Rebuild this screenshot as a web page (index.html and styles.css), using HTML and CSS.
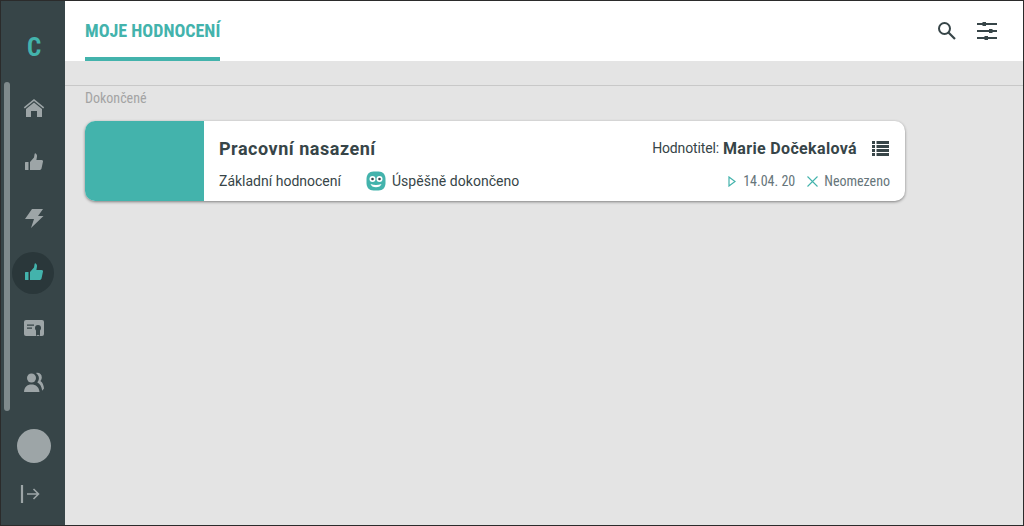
FILE: index.html
```html
<!DOCTYPE html>
<html lang="cs">
<head>
<meta charset="utf-8">
<title>Moje hodnocení</title>
<link rel="stylesheet" href="styles.css">
</head>
<body>
<div class="app">
  <aside class="sidebar">
    <div class="scrollbar"></div>
    <div class="logo">C</div>
    <nav class="nav">
      <div class="nav-item"><svg class="icon" width="24" height="24" viewBox="0 0 24 24"><path d="M12 3 1.800 11.300l1 1.200L12 5l9.200 7.500 1-1.200z"/><path d="M12 6.500 20 13v8h-5v-6H9v6H4v-8z"/></svg></div>
      <div class="nav-item"><svg class="icon" width="24" height="24" viewBox="0 0 24 24"><path d="M3.500 11h3v8h-3a.5.5 0 0 1-.5-.5v-7a.5.5 0 0 1 .5-.5z"/><path d="M8 11l4-4.500.6-3.500c.1-.6.500-.8 1-.6 1 .4 1.600 1.600 1.400 3l-.6 3.600h5.300c1 0 1.500.8 1.300 1.600l-1.500 7c-.2.900-.8 1.400-1.700 1.400H8z"/></svg></div>
      <div class="nav-item"><svg class="icon" width="24" height="24" viewBox="0 0 24 24"><path d="M10 3h11l-5 7h5.500L9 22l3-9H3z"/></svg></div>
      <div class="nav-item active"><svg class="icon" width="24" height="24" viewBox="0 0 24 24"><path d="M3.500 11h3v8h-3a.5.5 0 0 1-.5-.5v-7a.5.5 0 0 1 .5-.5z"/><path d="M8 11l4-4.500.6-3.500c.1-.6.500-.8 1-.6 1 .4 1.600 1.600 1.400 3l-.6 3.600h5.300c1 0 1.500.8 1.300 1.600l-1.500 7c-.2.900-.8 1.400-1.700 1.400H8z"/></svg></div>
      <div class="nav-item"><svg class="icon" width="24" height="24" viewBox="0 0 24 24"><rect x="2" y="4" width="20" height="16" rx="2"/><path class="icon-cut" d="M5 8.500h7v1.200H5zM5 11.500h5v1.200H5z"/><circle class="icon-cut" cx="16" cy="12" r="3"/><path class="icon-cut" d="M14 14h4v6l-2-1.200-2 1.200z"/></svg></div>
      <div class="nav-item"><svg class="icon" width="24" height="24" viewBox="0 0 24 24"><circle cx="9.500" cy="7" r="4.500"/><path d="M2 21c.2-5 3-7.500 7.500-7.500s7.500 2.500 8 7.500z"/><path d="M14 2c3-.8 5.800 1.200 5.800 4.200 0 1.400-.5 2.800-1.400 3.800 2.200 1.500 3.400 4.300 3.600 7.500l-1.800 2.300c-.5-4-2.200-7-5-8.500 1-1 1.700-2.600 1.700-4 0-2-1-3.600-2.900-5.300z"/></svg></div>
    </nav>
    <div class="avatar"></div>
    <div class="logout"><svg class="icon-line" width="24" height="24" viewBox="0 0 24 24"><path d="M4 3v18" stroke-width="2.200"/><path d="M9 12h11.500M15.500 7l5 5-5 5" stroke-width="1.600"/></svg></div>
  </aside>
  <div class="content">
    <header class="topbar">
      <div class="tab">MOJE HODNOCENÍ</div>
      <div class="tools">
        <svg class="tool-search" width="20" height="20" viewBox="0 0 20 20"><circle cx="7.500" cy="7.500" r="5.500" fill="none" stroke="#374548" stroke-width="2"/><path d="M11.500 11.500 18 18" stroke="#374548" stroke-width="2.200"/></svg>
        <svg class="tool-filter" width="20" height="18" viewBox="0 0 20 18"><path d="M0 2h20M0 9h20M0 16h20" stroke="#374548" stroke-width="2"/><path d="M5.500 0h3.500v4H5.500zM12 7h3.500v4H12zM7.500 14H11v4H7.500z" fill="#374548"/></svg>
      </div>
    </header>
    <main class="main">
      <section class="group">
        <h2 class="group-title">Dokončené</h2>
        <article class="card">
          <div class="card-thumb"></div>
          <div class="card-body">
            <div class="row row-top">
              <div class="card-title">Pracovní nasazení</div>
              <div class="rater">
                <span class="rater-label">Hodnotitel:</span>
                <span class="rater-name">Marie Dočekalová</span>
                <svg class="list-icon" width="17" height="15" viewBox="0 0 17 15"><path d="M0 0h3v3H0zM4.500 0H17v3H4.500zM0 4h3v3H0zM4.500 4H17v3H4.500zM0 8h3v3H0zM4.500 8H17v3H4.500zM0 12h3v3H0zM4.500 12H17v3H4.500z"/></svg>
              </div>
            </div>
            <div class="row row-bottom">
              <div class="meta">
                <span class="type">Základní hodnocení</span>
                <span class="status">
                  <svg width="20" height="20" viewBox="0 0 20 20"><path fill="#43b3ac" d="M7.500.500h5C17 .500 19.500 3.500 19.500 8v4c0 4.500-2.500 7.500-7 7.500h-5C3 19.500.500 16.500.500 12V8C.500 3.500 3 .500 7.500.500z"/><circle cx="6.500" cy="8" r="3" fill="#fff"/><circle cx="13.500" cy="8" r="3" fill="#fff"/><circle cx="6.500" cy="8" r="1.300" fill="#374548"/><circle cx="13.500" cy="8" r="1.300" fill="#374548"/><path d="M4.500 13c3.500 1.300 7.500 1.300 11 0-.5 2-2.800 3.300-5.500 3.300S5 15 4.500 13z" fill="#fff"/></svg>
                  Úspěšně dokončeno
                </span>
              </div>
              <div class="dates">
                <svg class="date-icon" width="8" height="11" viewBox="0 0 8 11"><path d="M1 1v9l6-4.500z" fill="none" stroke="#43b3ac" stroke-width="1.200"/></svg>
                <span class="date date-from">14.04. 20</span>
                <svg class="date-icon date-icon-x" width="11" height="11" viewBox="0 0 11 11"><path d="M.5.500l10 10M10.500.500l-10 10" stroke="#43b3ac" stroke-width="1.100"/></svg>
                <span class="date">Neomezeno</span>
              </div>
            </div>
          </div>
        </article>
      </section>
    </main>
  </div>
</div>
</body>
</html>
```
FILE: styles.css
```css
* { box-sizing: border-box; }
html, body { height: 100%; }
body {
  margin: 0;
  font-family: Roboto, "Liberation Sans", sans-serif;
  color: #374548;
  overflow: hidden;
}
.app {
  display: flex;
  height: 526px;
  border: 1px solid #2b2b2b;
  background: #e4e4e4;
}
.sidebar {
  position: relative;
  width: 64px;
  flex: none;
  background: #374548;
  display: flex;
  flex-direction: column;
  align-items: center;
  padding-top: 31px;
}
.scrollbar {
  position: absolute;
  left: 3px;
  top: 81px;
  width: 6px;
  height: 329px;
  border-radius: 3px;
  background: #7f8a8c;
}
.logo {
  margin-left: 2px;
  font-weight: 700;
  font-size: 25px;
  line-height: 32px;
  height: 32px;
  color: #43b3ac;
  font-stretch: 75%;
}
.nav {
  margin-top: 23px;
  display: flex;
  flex-direction: column;
  gap: 13px;
}
.nav-item {
  width: 42px;
  height: 42px;
  padding-left: 2px;
  border-radius: 50%;
  display: flex;
  align-items: center;
  justify-content: center;
}
.icon { fill: #9da5a7; display: block; }
.icon-cut { fill: #374548; }
.icon-line { fill: none; stroke: #9da5a7; display: block; }
.nav-item.active { background: #2a373a; }
.nav-item.active .icon { fill: #43b3ac; }
.avatar {
  width: 34px;
  height: 34px;
  margin-left: 2px;
  border-radius: 50%;
  background: #9da5a7;
  margin-top: 25px;
}
.logout { margin-top: 19px; margin-left: -6px; }
.content { flex: 1; min-width: 0; display: flex; flex-direction: column; }
.topbar {
  height: 60px;
  background: #fff;
  display: flex;
  justify-content: space-between;
  padding: 0 26px 0 20px;
}
.tab {
  height: 60px;
  border-bottom: 4px solid #43b3ac;
  color: #43b3ac;
  font-size: 18px;
  font-weight: 700;
  font-stretch: 75%;
  line-height: 59px;
}
.tools { display: flex; align-items: center; gap: 20px; }
.tool-search, .tool-filter { display: block; }
.main { flex: 1; padding-top: 24px; }
.group { border-top: 1px solid #c8c8c8; padding: 0 20px; }
.group-title {
  margin: 0;
  font-size: 14px;
  font-weight: 400;
  font-stretch: 75%;
  color: #a3a3a3;
  line-height: 25px;
}
.card {
  margin-top: 10px;
  width: 820px;
  height: 80px;
  display: flex;
  background: #fff;
  border-radius: 10px;
  overflow: hidden;
  box-shadow: 0 1px 3px rgba(0,0,0,.45);
}
.card-thumb { width: 119px; background: #43b3ac; }
.card-body {
  flex: 1;
  padding: 15px 15px 0;
  display: flex;
  flex-direction: column;
}
.row { display: flex; justify-content: space-between; align-items: center; }
.row-top { height: 24px; }
.row-bottom { height: 20px; margin-top: 11px; }
.card-title { font-size: 18px; font-weight: 700; letter-spacing: .52px; }
.rater { display: flex; align-items: center; margin-right: 1px; }
.rater-label { font-size: 14px; letter-spacing: -.15px; margin-right: 4px; }
.rater-name { font-size: 16px; font-weight: 700; letter-spacing: .35px; }
.list-icon { fill: #374548; margin-left: 15px; display: block; }
.meta { display: flex; align-items: center; font-size: 14px; }
.status { display: flex; align-items: center; gap: 6px; margin-left: 25px; letter-spacing: .05px; }
.dates { display: flex; align-items: center; }
.date { font-size: 14px; font-stretch: 75%; color: #66757a; }
.date-icon { display: block; margin-right: 7px; }
.date-icon-x { margin-right: 6px; }
.date-from { margin-right: 12px; }
```
